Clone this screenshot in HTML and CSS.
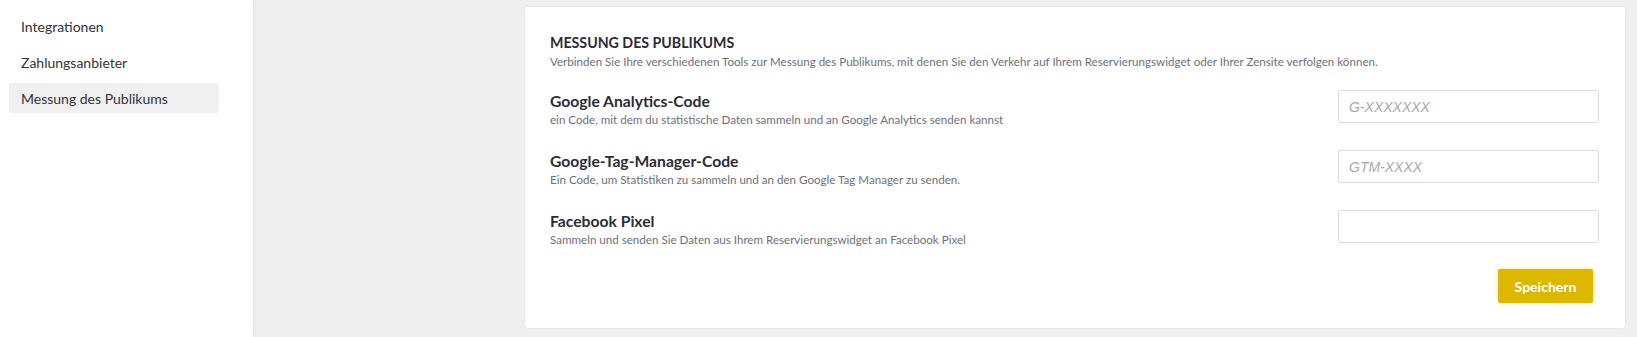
FILE: index.html
```html
<!DOCTYPE html>
<html lang="de">
<head>
<meta charset="utf-8">
<title>Messung des Publikums</title>
<link rel="stylesheet" href="styles.css">
</head>
<body>
<div class="layout">
  <nav class="sidebar">
    <a class="nav-item">Integrationen</a>
    <a class="nav-item">Zahlungsanbieter</a>
    <a class="nav-item active">Messung des Publikums</a>
  </nav>
  <main class="main">
    <section class="card">
      <h1 class="card-title">MESSUNG DES PUBLIKUMS</h1>
      <p class="card-desc">Verbinden Sie Ihre verschiedenen Tools zur Messung des Publikums, mit denen Sie den Verkehr auf Ihrem Reservierungswidget oder Ihrer Zensite verfolgen können.</p>
      <div class="rows">
        <div class="row">
          <div class="label">
            <div class="label-title">Google Analytics-Code</div>
            <div class="label-desc">ein Code, mit dem du statistische Daten sammeln und an Google Analytics senden kannst</div>
          </div>
          <input class="field" type="text" placeholder="G-XXXXXXX">
        </div>
        <div class="row">
          <div class="label">
            <div class="label-title">Google-Tag-Manager-Code</div>
            <div class="label-desc">Ein Code, um Statistiken zu sammeln und an den Google Tag Manager zu senden.</div>
          </div>
          <input class="field" type="text" placeholder="GTM-XXXX">
        </div>
        <div class="row">
          <div class="label">
            <div class="label-title">Facebook Pixel</div>
            <div class="label-desc">Sammeln und senden Sie Daten aus Ihrem Reservierungswidget an Facebook Pixel</div>
          </div>
          <input class="field" type="text">
        </div>
      </div>
      <div class="actions">
        <button class="btn-save" type="button">Speichern</button>
      </div>
    </section>
  </main>
</div>
</body>
</html>
```
FILE: styles.css
```css
* { box-sizing: border-box; }
html, body { margin: 0; padding: 0; }
body {
  font-family: Lato, "Noto Sans", sans-serif;
  color: #2c2c38;
  background: #efefef;
}
.layout {
  display: flex;
  min-height: 337px;
}
.sidebar {
  width: 253px;
  flex: none;
  background: #fff;
  padding: 11px 34px 0 9px;
  display: flex;
  flex-direction: column;
  gap: 6px;
  position: relative;
  z-index: 1;
  box-shadow: 1px 0 3px rgba(0,0,0,0.06);
}
.nav-item {
  display: flex;
  align-items: center;
  height: 30px;
  padding-left: 12px;
  font-size: 14px;
  color: #33333d;
  border-radius: 3px;
}
.nav-item.active { background: #f0f0f0; }
.main {
  flex: 1;
  padding: 7px 12px 9px 272px;
}
.card {
  background: #fff;
  border-radius: 3px;
  box-shadow: 0 0 3px rgba(0,0,0,0.08);
  padding: 26px 26px 25px 25px;
  height: 321px;
}
.card-title {
  margin: 0;
  font-size: 14.2px;
  line-height: 20px;
  font-weight: 700;
  color: #2c2c38;
}
.card-desc {
  margin: 0;
  font-size: 11.6px;
  line-height: 18px;
  color: #6f6f78;
}
.rows {
  margin-top: 19px;
  display: flex;
  flex-direction: column;
  gap: 23px;
}
.row {
  display: flex;
  justify-content: space-between;
  align-items: flex-start;
  height: 37px;
}
.label { padding-top: 1px; }
.label-title {
  font-size: 15.7px;
  line-height: 20px;
  font-weight: 700;
  color: #2c2c38;
}
.label-desc {
  font-size: 11.6px;
  line-height: 17px;
  color: #6f6f78;
}
.field {
  width: 261px;
  height: 33px;
  border: 1px solid #dcdcdc;
  border-radius: 2px;
  padding: 0 10px;
  font-family: "Liberation Sans", Arial, sans-serif;
  font-size: 14px;
  color: #333;
  background: #fff;
  outline: none;
}
.field::placeholder {
  color: #a8a8b0;
  font-style: italic;
}
.actions {
  margin-top: 22px;
  display: flex;
  justify-content: flex-end;
  padding-right: 6px;
}
.btn-save {
  width: 95px;
  height: 34px;
  border: none;
  border-radius: 2px;
  background: #dcb800;
  color: #fff;
  font-family: Lato, "Noto Sans", sans-serif;
  font-weight: 700;
  font-size: 14px;
  box-shadow: 0 0 4px rgba(220,184,0,0.45);
  cursor: pointer;
}
```
